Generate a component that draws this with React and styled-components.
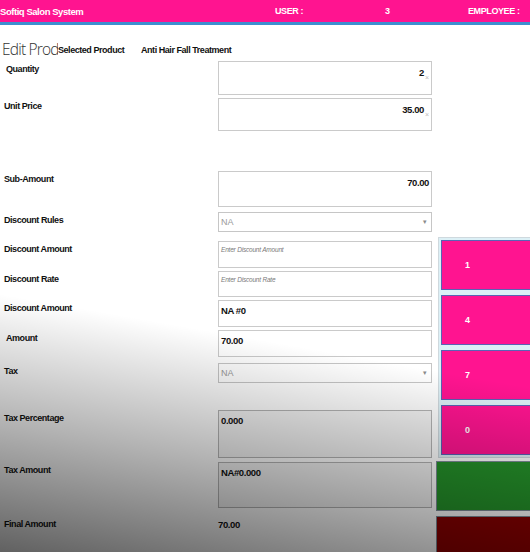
import React from "react";
import styled, { createGlobalStyle } from "styled-components";

const GlobalStyle = createGlobalStyle`
  html, body {
    margin: 0;
    padding: 0;
    background: #ffffff;
  }
  body {
    font-family: "Liberation Sans", Arial, sans-serif;
  }
`;

const rows = [
  { label: "Quantity", indent: 6, gap: 0, h: 34, kind: "num", value: "2", clear: true },
  { label: "Unit Price", gap: 3, h: 33, kind: "num", value: "35.00", clear: true },
  { label: "Sub-Amount", gap: 40, h: 36, kind: "num", value: "70.00" },
  { label: "Discount Rules", gap: 5, h: 20, kind: "select", value: "NA" },
  { label: "Discount Amount", gap: 9, h: 27, kind: "hint", value: "Enter  Discount Amount" },
  { label: "Discount Rate", gap: 3, h: 26, kind: "hint", value: "Enter Discount Rate" },
  { label: "Discount Amount", gap: 3, h: 27, kind: "text", value: "NA #0" },
  { label: "Amount", indent: 6, gap: 3, h: 27, kind: "text", value: "70.00" },
  { label: "Tax", gap: 6, h: 20, kind: "select", value: "NA" },
  { label: "Tax Percentage", gap: 27, h: 48, kind: "text", value: "0.000", muted: true },
  { label: "Tax Amount", gap: 4, h: 46, kind: "text", value: "NA#0.000", muted: true },
];

const keys = ["1", "4", "7", "0"];

const App = () => {
  return (
    <>
      <GlobalStyle />
      <Page>
        <Header>
          <HeaderText>Softiq Salon System</HeaderText>
          <HeaderText $bold>USER :</HeaderText>
          <HeaderText $bold>3</HeaderText>
          <HeaderText $bold>EMPLOYEE :</HeaderText>
        </Header>
        <Body>
          <FormCol>
            <TitleRow>
              <PageTitle>Edit Product</PageTitle>
              <SelLabel>Selected Product</SelLabel>
              <SelLabel>Anti Hair Fall Treatment</SelLabel>
            </TitleRow>
            {rows.map((r, i) => (
              <Row key={i} $gap={r.gap}>
                <Label $indent={r.indent}>{r.label}</Label>
                {r.kind === "select" ? (
                  <Select $h={r.h}>
                    <span>{r.value}</span>
                    <Caret>▾</Caret>
                  </Select>
                ) : (
                  <Field $h={r.h} $right={r.kind === "num"} $muted={r.muted}>
                    {r.kind === "hint" ? (
                      <Hint>{r.value}</Hint>
                    ) : (
                      <Value>{r.value}</Value>
                    )}
                    {r.clear && <Clear>×</Clear>}
                  </Field>
                )}
              </Row>
            ))}
            <Row $gap={8}>
              <Label>Final Amount</Label>
              <FinalValue>70.00</FinalValue>
            </Row>
          </FormCol>
          <SideCol>
            <KeyFrame>
              {keys.map((k) => (
                <KeyButton key={k}>{k}</KeyButton>
              ))}
            </KeyFrame>
            <ActionButton $color="#25922a" $top={3} />
            <ActionButton $color="#8a0000" $top={5} />
          </SideCol>
        </Body>
        <Shade />
      </Page>
    </>
  );
};

export default App;

const Page = styled.div`
  position: relative;
  width: 530px;
  height: 552px;
  overflow: hidden;
  background: #ffffff;
`;

const Header = styled.div`
  height: 22px;
  background: #ff1490;
  border-bottom: 3px solid #3d8fcf;
  display: grid;
  grid-template-columns: 275px 110px 83px 1fr;
  align-items: center;
`;

const HeaderText = styled.span`
  color: #ffffff;
  font-size: ${(p) => (p.$bold ? "9px" : "9.5px")};
  font-weight: 700;
  letter-spacing: ${(p) => (p.$bold ? "-0.4px" : "-0.45px")};
  white-space: nowrap;
`;

const Body = styled.div`
  display: flex;
`;

const FormCol = styled.div`
  width: 436px;
  display: flex;
  flex-direction: column;
`;

const TitleRow = styled.div`
  height: 36px;
  display: flex;
  align-items: flex-end;
  padding-bottom: 6px;
  box-sizing: border-box;
`;

const PageTitle = styled.div`
  width: 58px;
  padding-left: 2px;
  box-sizing: border-box;
  overflow: hidden;
  white-space: nowrap;
  font-family: "Open Sans", Lato, sans-serif;
  font-weight: 300;
  font-size: 15.5px;
  letter-spacing: -0.8px;
  line-height: 18px;
  color: #333333;
  margin-bottom: -3px;
`;

const SelLabel = styled.div`
  width: 83px;
  font-size: 9px;
  font-weight: 700;
  letter-spacing: -0.45px;
  color: #111111;
  white-space: nowrap;
`;

const Row = styled.div`
  display: grid;
  grid-template-columns: 218px 214px;
  margin-top: ${(p) => p.$gap}px;
`;

const Label = styled.div`
  padding: 3px 0 0 ${(p) => p.$indent || 4}px;
  font-size: 9px;
  font-weight: 700;
  letter-spacing: -0.45px;
  color: #111111;
  white-space: nowrap;
`;

const Field = styled.div`
  height: ${(p) => p.$h}px;
  box-sizing: border-box;
  border: 1px solid ${(p) => (p.$muted ? "#b4b4b4" : "#cacaca")};
  background: ${(p) => (p.$muted ? "#f3f3f3" : "#ffffff")};
  display: flex;
  justify-content: ${(p) => (p.$right ? "flex-end" : "flex-start")};
  align-items: flex-start;
  padding: ${(p) => (p.$right ? "5px 2px 0 0" : "4px 0 0 2px")};
`;

const Value = styled.span`
  font-size: 9.5px;
  font-weight: 700;
  letter-spacing: -0.4px;
  color: #111111;
`;

const Clear = styled.span`
  font-size: 7px;
  color: #bdbdbd;
  margin-top: 7px;
  margin-left: 1px;
`;

const Hint = styled.span`
  font-size: 6.5px;
  font-style: italic;
  letter-spacing: -0.2px;
  color: #7a7a7a;
`;

const Select = styled.div`
  height: ${(p) => p.$h}px;
  box-sizing: border-box;
  border: 1px solid #c6c6c6;
  display: flex;
  align-items: center;
  justify-content: space-between;
  padding: 0 4px 0 2px;
  font-size: 9px;
  color: #9a9a9a;
`;

const Caret = styled.span`
  font-size: 7px;
  color: #8a8a8a;
`;

const FinalValue = styled.div`
  padding-top: 3px;
  font-size: 9.5px;
  font-weight: 700;
  letter-spacing: -0.4px;
  color: #111111;
`;

const SideCol = styled.div`
  flex: 1;
  padding-top: 212px;
  display: flex;
  flex-direction: column;
`;

const KeyFrame = styled.div`
  margin-left: 2px;
  border: 1px solid #cfd9de;
  border-right: none;
  background: #dcf0f6;
  padding: 2px 0 2px 2px;
  display: flex;
  flex-direction: column;
  gap: 5px;
`;

const KeyButton = styled.div`
  height: 50px;
  box-sizing: border-box;
  background: #ff1490;
  border: 1px solid #5a63b4;
  border-right: none;
  display: flex;
  align-items: center;
  padding-left: 23px;
  color: #ffffff;
  font-size: 9px;
  font-weight: 700;
`;

const ActionButton = styled.div`
  height: 50px;
  margin-top: ${(p) => p.$top}px;
  box-sizing: border-box;
  background: ${(p) => p.$color};
  border: 1px solid #7f8e99;
  border-right: none;
`;

const Shade = styled.div`
  position: absolute;
  inset: 0;
  pointer-events: none;
  background: linear-gradient(
    190deg,
    rgba(0, 0, 0, 0) 60%,
    rgba(0, 0, 0, 0.3) 80%,
    rgba(0, 0, 0, 0.62) 100%
  );
`;
